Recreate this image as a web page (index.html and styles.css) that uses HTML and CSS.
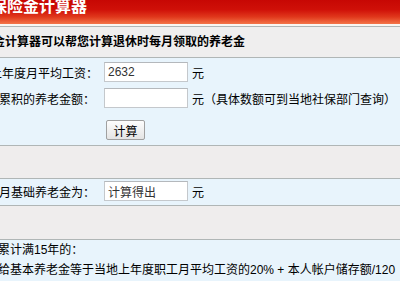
FILE: index.html
```html
<!DOCTYPE html>
<html lang="zh-CN">

<head>
    <meta charset="UTF-8">
    <meta name="viewport" content="width=device-width, initial-scale=1.0">
    <title>养老保险金计算器</title>
    <link rel="stylesheet" href="styles.css">
</head>

<body>

    <div class="calc">
        <div class="calc-header">
            <h1>养老保险金计算器</h1>
        </div>

        <div class="calc-intro">养老保险金计算器可以帮您计算退休时每月领取的养老金</div>

        <div class="calc-form">
            <div class="field">
                <label class="field-label" for="avgSalary">上年度月平均工资：</label>
                <input type="text" id="avgSalary" class="field-input" value="2632">
                <span class="field-unit">元</span>
            </div>
            <div class="field field-second">
                <label class="field-label field-label-shift" for="savedAmount">个人账户累积的养老金额：</label>
                <input type="text" id="savedAmount" class="field-input">
                <span class="field-unit">元（具体数额可到当地社保部门查询）</span>
            </div>
            <div class="field-actions">
                <button class="calc-button" onclick="calculate()">计算</button>
            </div>
        </div>

        <div class="calc-spacer"></div>

        <div class="calc-result">
            <div class="field">
                <label class="field-label field-label-shift" for="monthlyPension">每月基础养老金为：</label>
                <input type="text" id="monthlyPension" class="field-input" value="计算得出" readonly>
                <span class="field-unit">元</span>
            </div>
        </div>

        <div class="calc-spacer calc-spacer-tall"></div>

        <div class="calc-notes">
            <p>缴费累计满15年的：</p>
            <p>月发给基本养老金等于当地上年度职工月平均工资的20% + 本人帐户储存额/120</p>
        </div>
    </div>

    <script>
        function calculate() {
            var salary = parseFloat(document.getElementById('avgSalary').value) || 0;
            var saved = parseFloat(document.getElementById('savedAmount').value) || 0;
            var result = salary * 0.2 + saved / 120;
            document.getElementById('monthlyPension').value = result.toFixed(2);
        }
    </script>

</body>

</html>
```

FILE: styles.css
```css
body {
    margin: 0;
    overflow: hidden;
    font-family: "Liberation Sans", "Noto Sans CJK SC", sans-serif;
    font-size: 12px;
    color: #000;
    background-color: #e8f4fc;
}

.calc {
    width: 480px;
    margin-left: -60px;
    margin-top: -8px;
}

.calc-header {
    height: 32px;
    padding-left: 19px;
    background: linear-gradient(#c00000 0, #cf1008 55%, #e0381c 78%, #f47448 100%);
    border-bottom: 2px solid #f8f6f2;
}

.calc-header h1 {
    margin: 0;
    font-size: 16px;
    line-height: 30px;
    font-weight: bold;
    color: #fff;
}

.calc-intro {
    height: 30px;
    line-height: 30px;
    padding-left: 5px;
    font-weight: bold;
    background-color: #efeeee;
    border-top: 1px solid #b0b6b6;
    border-bottom: 1px solid #b0b6b6;
}

.calc-form {
    padding: 4px 0 5px;
    background-color: #e8f4fc;
    border-bottom: 1px solid #b0b6b6;
}

.field {
    display: flex;
    align-items: center;
    height: 20px;
}

.field-second {
    margin-top: 6px;
}

.field-label {
    box-sizing: border-box;
    width: 158px;
    text-align: right;
    white-space: nowrap;
}

.field-label-shift {
    padding-right: 3px;
}

.field-input {
    box-sizing: border-box;
    width: 84px;
    height: 20px;
    margin: 0 0 0 6px;
    padding: 0 3px;
    border: 1px solid #c4c8cc;
    border-top-color: #b4b8bc;
    background-color: #fff;
    font-family: "Liberation Sans", "Noto Sans CJK SC", sans-serif;
    font-size: 12px;
    color: #333;
}

.field-unit {
    margin-left: 4px;
    white-space: nowrap;
}

.field-actions {
    margin-top: 12px;
    padding-left: 166px;
    height: 20px;
}

.calc-button {
    box-sizing: border-box;
    width: 39px;
    height: 20px;
    padding: 0;
    border: 1px solid #a0a0a0;
    border-radius: 2px;
    background: linear-gradient(#fdfdfd, #e4e4e4);
    font-family: "Noto Sans CJK SC", sans-serif;
    font-size: 12px;
    color: #000;
    cursor: pointer;
}

.calc-spacer {
    height: 32px;
    background-color: #efeded;
    border-bottom: 1px solid #b0b6b6;
}

.calc-spacer-tall {
    height: 33px;
}

.calc-result {
    box-sizing: border-box;
    height: 27px;
    padding-top: 2px;
    background-color: #e8f4fc;
    border-bottom: 1px solid #b0b6b6;
}

.calc-notes {
    padding-left: 34px;
    background-color: #e8f4fc;
}

.calc-notes p {
    margin: 0;
    line-height: 20px;
    white-space: nowrap;
}
```
